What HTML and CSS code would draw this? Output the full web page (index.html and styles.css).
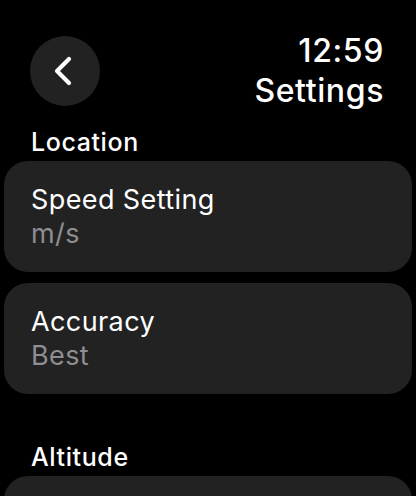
FILE: index.html
```html
<!DOCTYPE html>
<html>
<head>
<meta charset="utf-8">
<link rel="stylesheet" href="styles.css">
</head>
<body>
<div class="screen">
  <header class="header">
    <button class="back" aria-label="Back">
      <svg width="70" height="70" viewBox="0 0 70 70"><path d="M39 23 L27 35 L39 47" fill="none" stroke="#fff" stroke-width="4.2" stroke-linecap="round" stroke-linejoin="round"/></svg>
    </button>
    <div class="titles">
      <div class="time">12:59</div>
      <div class="title">Settings</div>
    </div>
  </header>
  <div class="section-label">Location</div>
  <div class="card">
    <div class="card-title">Speed Setting</div>
    <div class="card-value">m/s</div>
  </div>
  <div class="card">
    <div class="card-title">Accuracy</div>
    <div class="card-value">Best</div>
  </div>
  <div class="section-label section-gap">Altitude</div>
  <div class="card card-empty"></div>
</div>
</body>
</html>
```
FILE: styles.css
```css
html, body {
  margin: 0;
  padding: 0;
  background: #000;
  overflow: hidden;
}
body {
  font-family: Inter, "Noto Sans", sans-serif;
  color: #fff;
  width: 416px;
  height: 496px;
}
.screen {
  padding: 0 4px;
  height: 496px;
  overflow: hidden;
}
.header {
  display: flex;
  justify-content: space-between;
  align-items: flex-start;
  padding: 31px 28px 0 26px;
}
.back {
  width: 70px;
  height: 70px;
  margin-top: 5px;
  border-radius: 50%;
  background: #222222;
  border: none;
  padding: 0;
  display: flex;
  align-items: center;
  justify-content: center;
}
.back svg {
  display: block;
}
.titles {
  text-align: right;
  font-size: 32px;
  line-height: 40px;
  font-weight: 500;
  letter-spacing: 0.6px;
}
.section-label {
  margin: 16px 0 4px 27px;
  font-size: 25px;
  line-height: 30px;
  font-weight: 500;
  letter-spacing: 0.6px;
}
.section-gap {
  margin-top: 48px;
}
.card {
  background: #222222;
  border-radius: 24px;
  padding: 22px 27px 21px;
  margin-bottom: 11px;
  font-size: 27px;
  line-height: 34px;
  letter-spacing: 0.4px;
}
.card-empty {
  height: 68px;
}
.card-title {
  color: #fff;
}
.card-value {
  color: #8e8e93;
}
```
